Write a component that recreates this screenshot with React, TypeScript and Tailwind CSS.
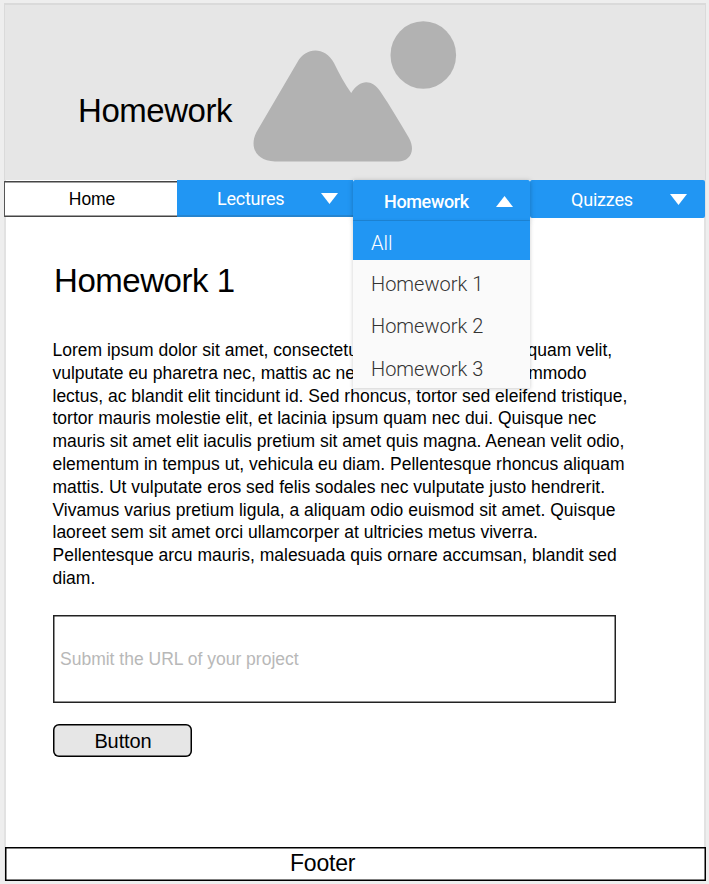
import type { ReactNode } from 'react';

const paragraph: ReactNode[] = [
  <>Lorem ipsum dolor sit amet, consectetur <span className="tracking-[0.25px]">adipiscing elit. </span>Ut aliquam velit,</>,
  'vulputate eu pharetra nec, mattis ac neque. Duis vulputate commodo',
  'lectus, ac blandit elit tincidunt id. Sed rhoncus, tortor sed eleifend tristique,',
  'tortor mauris molestie elit, et lacinia ipsum quam nec dui. Quisque nec',
  'mauris sit amet elit iaculis pretium sit amet quis magna. Aenean velit odio,',
  'elementum in tempus ut, vehicula eu diam. Pellentesque rhoncus aliquam',
  'mattis. Ut vulputate eros sed felis sodales nec vulputate justo hendrerit.',
  'Vivamus varius pretium ligula, a aliquam odio euismod sit amet. Quisque',
  'laoreet sem sit amet orci ullamcorper at ultricies metus viverra.',
  'Pellentesque arcu mauris, malesuada quis ornare accumsan, blandit sed',
  'diam.',
];

function Landscape() {
  return (
    <svg className="ml-[21px] mt-[16px] h-[141px] w-[204px] shrink-0" viewBox="253 21 204 141" fill="#b2b2b2">
      <ellipse cx="423.3" cy="55" rx="32.8" ry="33.7" />
      <path d="M297.5 62C306 46.500 325 46.500 334 63C339.500 74 345 84.500 351.200 93C359.500 79 372 79 380 91C391 107 400 123 409 138C416 151 410 161.500 398 161.500H275C256 161 249 147 256.500 132Z" />
    </svg>
  );
}

function Arrow({ up = false }: { up?: boolean }) {
  return (
    <svg className="h-[11px] w-[17px]" viewBox="0 0 17 11" fill="#fff">
      <path d={up ? 'M0 11L8.500 0L17 11Z' : 'M0 0H17L8.500 11Z'} />
    </svg>
  );
}

function Menu() {
  return (
    <div className="absolute left-0 top-[41px] z-10 h-[167px] w-full bg-[#fafafa] font-['Roboto',sans-serif] text-[20px] font-light leading-[24px] text-[#333] shadow-[0_1px_4px_rgba(0,0,0,0.2)]">
      <div className="h-[39px] bg-[#2196f3] pl-[18px] pt-[10px] text-white">All</div>
      <div className="h-[42px] pl-[18px] pt-[12px]">Homework 1</div>
      <div className="h-[43px] pl-[18px] pt-[12px]">Homework 2</div>
      <div className="h-[43px] pl-[18px] pt-[12px]">Homework 3</div>
    </div>
  );
}

export default function App() {
  return (
    <div className="h-[884px] w-[709px] overflow-hidden bg-[#eee] pl-[4px] pt-[3px] font-['Liberation_Sans',Arial,sans-serif] text-black">
      <div className="flex h-[878px] w-[702px] flex-col bg-[linear-gradient(to_right,#e2e2e2_1.500px,#fff_1.500px,#fff_700px,#e2e2e2_700px)]">
        <header className="flex h-[177px] w-[702px] shrink-0 border-x border-t-2 border-[#dadada] bg-[#e6e6e6]">
          <h1 className="ml-[73px] mt-[87px] w-[154px] whitespace-nowrap text-[33px] leading-[38px] tracking-[-0.45px]">Homework</h1>
          <Landscape />
        </header>

        <nav className="flex h-[41px] shrink-0 items-start font-['Roboto',sans-serif] text-[18px] text-white">
          <a className="mt-[1px] flex h-[36px] w-[173px] items-center justify-center bg-white pl-[3px] font-['Liberation_Sans',Arial,sans-serif] text-[17.500px] tracking-[-0.1px] text-black shadow-[inset_1px_0_#555,inset_0_1.500px_#444,inset_0_-1.500px_#444]">Home</a>
          <a className="flex h-[37px] w-[176px] items-center justify-between border-b-2 border-[#2585d0] bg-[#2196f3] pl-[40px] pr-[15px] pt-px"><span className="tracking-[-0.25px]">Lectures</span><Arrow /></a>
          <div className="relative z-10 h-[41px] w-[177px] shadow-[0_1px_5px_rgba(0,0,0,0.25)]">
            <a className="flex h-[41px] items-center justify-between rounded-t-[2px] border-b border-[#1e88db] bg-[#2196f3] pl-[31px] pr-[17px] pt-[2px] font-medium"><span className="tracking-[-0.35px]">Homework</span><Arrow up /></a>
            <Menu />
          </div>
          <a className="flex h-[38px] w-[175px] items-center justify-between rounded-[2px] bg-[#2196f3] pl-[41px] pr-[18px]"><span className="tracking-[-0.2px]">Quizzes</span><Arrow /></a>
        </nav>

        <main className="flex grow flex-col pl-[49px]">
          <h2 className="mt-[41px] pl-px text-[33px] leading-[38px] tracking-[-0.45px]">Homework 1</h2>
          <div className="-ml-[0.5px] mt-[39px] h-[252px] whitespace-nowrap text-[17.500px] leading-[22.800px]">
            {paragraph.map((line, i) => (
              <div key={i}>{line}</div>
            ))}
          </div>
          <div className="mt-[24px] flex h-[88px] w-[563px] items-center bg-white pl-[7px] text-[17.500px] text-[#b8b8b8] shadow-[inset_0_0_0_1.500px_#222]">Submit the URL of your project</div>
          <button className="mt-[21px] flex h-[33px] w-[139px] items-center justify-center rounded-[6px] bg-[#e6e6e6] pl-[1px] text-[20px] tracking-[-0.1px] shadow-[inset_0_0_0_1.500px_#000]">Button</button>
        </main>

        <footer className="ml-px flex h-[34px] w-[701px] shrink-0 items-center bg-white pb-[2px] pl-[285px] text-[23px] tracking-[-0.2px] shadow-[inset_0_0_0_1.500px_#000]">Footer</footer>
      </div>
    </div>
  );
}
